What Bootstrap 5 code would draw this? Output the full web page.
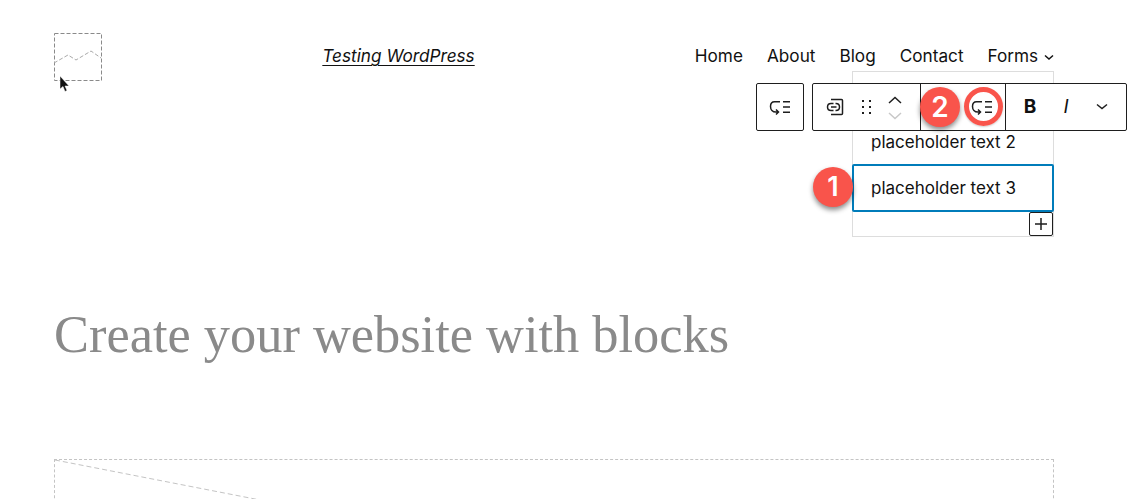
<!DOCTYPE html>
<html lang="en">

<head>
    <meta charset="UTF-8">
    <title>Testing WordPress</title>
    <link href="https://cdn.jsdelivr.net/npm/bootstrap@5.3.0/dist/css/bootstrap.min.css" rel="stylesheet">
    <style>
        html, body {
            height: 499px;
            overflow: hidden;
        }

        body {
            background: #fff;
            color: #111;
            font-family: Inter, "Liberation Sans", Arial, sans-serif;
            font-size: 17.2px;
        }

        .page-wrap {
            width: 1000px;
            margin-left: 54px;
        }

        .site-head {
            height: 48px;
            margin-top: 33px;
        }

        .logo-box {
            width: 48px;
            height: 48px;
            display: block;
            flex: none;
        }

        .site-title {
            flex: none;
            width: 580px;
            padding-left: 13px;
            text-align: center;
            line-height: 46px;
        }

        .site-title a {
            color: #111;
            font-style: italic;
            text-decoration: underline;
            text-underline-offset: 3px;
            text-decoration-thickness: 1px;
        }

        .site-menu {
            flex: none;
            gap: 24px;
            margin-left: auto;
            line-height: 46px;
            white-space: nowrap;
        }

        .site-menu a {
            color: #111;
            text-decoration: none;
        }

        .menu-caret {
            margin-left: 1px;
        }

        .list-stage {
            height: 166px;
            margin-left: 798px;
            width: 202px;
            margin-top: -10px;
            border: 1px solid #ddd;
            position: relative;
        }

        .list-line {
            height: 48px;
            padding-left: 18px;
            display: flex;
            align-items: center;
            font-size: 17px;
        }

        .list-line-first {
            margin-top: 44px;
            padding-top: 6px;
        }

        .list-line-active {
            margin: 0 -1px;
            width: 202px;
            padding-left: 17px;
            padding-top: 2px;
            border: 2px solid #007cba;
            border-radius: 2px;
        }

        .add-btn {
            position: absolute;
            right: 0;
            bottom: 0;
            width: 24px;
            height: 24px;
            background: #fff;
            border: 1px solid #1e1e1e;
            border-radius: 2px;
            display: flex;
            align-items: center;
            justify-content: center;
        }

        .tool-row {
            position: absolute;
            left: 756px;
            top: 83px;
            right: 0;
            display: flex;
            gap: 8px;
        }

        .tool-group {
            height: 48px;
            background: #fff;
            border: 1px solid #1e1e1e;
            border-radius: 2px;
            display: flex;
            align-items: center;
        }

        .tool-single {
            width: 48px;
            justify-content: center;
        }

        .tool-main {
            flex: 1;
        }

        .tool-part {
            height: 100%;
            display: flex;
            align-items: center;
        }

        .part-move {
            width: 108px;
            border-right: 1px solid #1e1e1e;
            padding-left: 12px;
        }

        .part-list {
            width: 85px;
            border-right: 1px solid #1e1e1e;
            justify-content: flex-end;
            padding-right: 11px;
        }

        .part-format {
            padding-left: 6px;
        }

        .format-slot {
            width: 36px;
            display: flex;
            justify-content: center;
            align-items: center;
        }

        .bold-mark {
            font-weight: 700;
            font-size: 19px;
        }

        .italic-mark {
            font-style: italic;
            font-size: 19px;
        }

        .mover-stack {
            display: flex;
            flex-direction: column;
            gap: 8px;
            margin-left: 15px;
            margin-top: 1px;
        }

        .mover-stack svg {
            display: block;
        }

        .step-badge {
            position: absolute;
            width: 40px;
            height: 40px;
            border-radius: 50%;
            background: #f9544b;
            color: #fff;
            font-size: 28px;
            font-weight: 600;
            display: flex;
            align-items: center;
            justify-content: center;
            box-shadow: 0 3px 5px rgba(0, 0, 0, 0.45);
        }

        .badge-one {
            left: 813px;
            top: 167px;
            font-size: 27px;
        }

        .badge-two {
            left: 920px;
            top: 87px;
        }

        .ring-mark {
            position: absolute;
            left: 964px;
            top: 87px;
            width: 39px;
            height: 39px;
            border: 5px solid #f9544b;
            border-radius: 50%;
            box-shadow: 0 1px 2px rgba(0, 0, 0, 0.2);
        }

        .pointer-mark {
            position: absolute;
            left: 59px;
            top: 76px;
        }

        .hero-title {
            font-family: "Liberation Serif", "DejaVu Serif", serif;
            font-weight: 400;
            color: #8a8a8a;
            font-size: 52.4px;
            line-height: 64px;
            margin: 65px 0 0;
        }

        .media-box {
            height: 60px;
            margin-top: 93px;
            border: 1px dashed #c4c4c4;
            border-bottom: 0;
            overflow: hidden;
        }

        .media-box svg {
            display: block;
        }
    </style>
</head>

<body>
    <div class="page-wrap">
        <div class="site-head d-flex align-items-start">
            <svg class="logo-box" viewBox="0 0 48 48" fill="none" stroke="#8a8a8a" stroke-dasharray="4 2">
                <rect x="0.5" y="0.5" width="47" height="47"></rect>
                <path d="M0 30 L14 22 L22 27 L37 18 L47 25" stroke="#aaa"></path>
            </svg>
            <div class="site-title"><a href="#">Testing WordPress</a></div>
            <div class="site-menu d-flex align-items-center">
                <a href="#">Home</a>
                <a href="#">About</a>
                <a href="#">Blog</a>
                <a href="#">Contact</a>
                <a href="#">Forms
                    <svg class="menu-caret" width="10" height="10" viewBox="0 0 10 10" fill="none" stroke="#111" stroke-width="1.5"><path d="M1 3.5 L5 7 L9 3.5"></path></svg>
                </a>
            </div>
        </div>

        <div class="list-stage">
            <div class="list-line list-line-first">placeholder text 2</div>
            <div class="list-line list-line-active">placeholder text 3</div>
            <div class="add-btn">
                <svg width="12" height="12" viewBox="0 0 12 12" stroke="#1e1e1e" stroke-width="1.5"><path d="M6 0 V12 M0 6 H12"></path></svg>
            </div>
        </div>

        <h1 class="hero-title">Create your website with blocks</h1>

        <div class="media-box">
            <svg width="1000" height="60" fill="none" stroke="#c4c4c4" stroke-dasharray="5 3"><path d="M0 0 L1000 195"></path></svg>
        </div>
    </div>

    <div class="tool-row">
        <div class="tool-group tool-single">
            <svg width="24" height="24" viewBox="0 0 24 24" fill="none" stroke="#1e1e1e" stroke-width="1.5"><path d="M12 6.750 H6.500 C3.500 6.750 2.500 9.500 2.500 11.500 C2.500 14.500 4.500 17 8 17 H10 M8 14.500 L10.500 17 L8 19.500 M15 6.750 H22 M15 12 H22 M15 17.250 H22"></path></svg>
        </div>
        <div class="tool-group tool-main">
            <div class="tool-part part-move">
                <svg width="20" height="20" viewBox="0 0 20 20" fill="none" stroke="#1e1e1e" stroke-width="1.500"><path d="M6 2.500 H16.500 Q17.500 2.500 17.500 3.500 V16.500 Q17.500 17.500 16.500 17.500 H6 M8.500 6.500 H6 Q2.500 6.500 2.500 10 Q2.500 13.500 6 13.500 H8.500 M10.500 6.500 H11 Q14.500 6.500 14.500 10 Q14.500 13.500 11 13.500 H10.500 M6 10 H11.500"></path></svg>
                <svg class="ms-3" width="12" height="18" viewBox="0 0 12 18" fill="#1e1e1e"><rect x="1" y="2" width="2" height="2"></rect><rect x="8" y="2" width="2" height="2"></rect><rect x="1" y="8" width="2" height="2"></rect><rect x="8" y="8" width="2" height="2"></rect><rect x="1" y="14" width="2" height="2"></rect><rect x="8" y="14" width="2" height="2"></rect></svg>
                <div class="mover-stack">
                    <svg width="14" height="8" viewBox="0 0 14 8" fill="none" stroke="#1e1e1e" stroke-width="1.5"><path d="M1 7 L7 1.500 L13 7"></path></svg>
                    <svg width="14" height="8" viewBox="0 0 14 8" fill="none" stroke="#c8c8c8" stroke-width="1.5"><path d="M1 1 L7 6.500 L13 1"></path></svg>
                </div>
            </div>
            <div class="tool-part part-list">
                <svg width="24" height="24" viewBox="0 0 24 24" fill="none" stroke="#1e1e1e" stroke-width="1.5"><path d="M12 6.750 H6.500 C3.500 6.750 2.500 9.500 2.500 11.500 C2.500 14.500 4.500 17 8 17 H10 M8 14.500 L10.500 17 L8 19.500 M15 6.750 H22 M15 12 H22 M15 17.250 H22"></path></svg>
            </div>
            <div class="tool-part part-format">
                <div class="format-slot bold-mark">B</div>
                <div class="format-slot italic-mark">I</div>
                <div class="format-slot">
                    <svg width="12" height="8" viewBox="0 0 12 8" fill="none" stroke="#1e1e1e" stroke-width="1.5"><path d="M1 1.500 L6 5.500 L11 1.500"></path></svg>
                </div>
            </div>
        </div>
    </div>

    <div class="step-badge badge-one">1</div>
    <div class="step-badge badge-two">2</div>
    <div class="ring-mark"></div>

    <svg class="pointer-mark" width="12" height="18" viewBox="0 0 12 18"><path d="M1 0 V13 L4 10.500 L6 15.500 L8 14.500 L6 10 H10 Z" fill="#111" stroke="#fff" stroke-width="0.5"></path></svg>
</body>

</html>
